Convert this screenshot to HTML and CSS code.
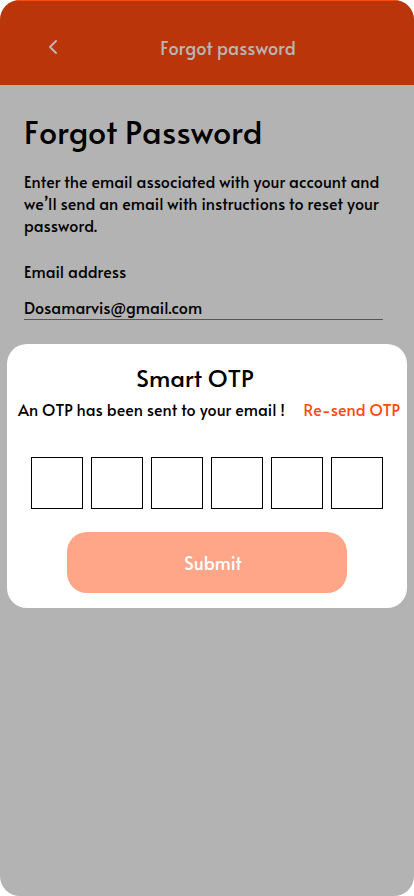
FILE: index.html
```html
<!DOCTYPE html>
<html lang="en">
<head>
<meta charset="utf-8">
<meta name="viewport" content="width=device-width, initial-scale=1">
<title>Forgot password</title>
<link rel="stylesheet" href="styles.css">
</head>
<body>
<div class="screen">
  <header class="bar">
    <button class="back" type="button" aria-label="Back">
      <svg width="10" height="16" viewBox="0 0 10 16" fill="none" stroke="currentColor" stroke-width="2" stroke-linecap="round" stroke-linejoin="round"><path d="M8 2 2 8l6 6"/></svg>
    </button>
    <p class="bar-title">Forgot password</p>
  </header>
  <main class="content">
    <h1>Forgot Password</h1>
    <p class="intro">Enter the email associated with your account and we’ll send an email with instructions to reset your password.</p>
    <label class="label" for="email">Email address</label>
    <input class="email" id="email" type="email" value="Dosamarvis@gmail.com">
  </main>
  <section class="dialog" role="dialog" aria-labelledby="otp-title">
    <h2 id="otp-title">Smart OTP</h2>
    <div class="notice">
      <p>An OTP has been sent to your email !</p>
      <a href="#">Re-send OTP</a>
    </div>
    <form>
      <div class="digits">
        <input type="text" inputmode="numeric" maxlength="1" aria-label="Digit 1">
        <input type="text" inputmode="numeric" maxlength="1" aria-label="Digit 2">
        <input type="text" inputmode="numeric" maxlength="1" aria-label="Digit 3">
        <input type="text" inputmode="numeric" maxlength="1" aria-label="Digit 4">
        <input type="text" inputmode="numeric" maxlength="1" aria-label="Digit 5">
        <input type="text" inputmode="numeric" maxlength="1" aria-label="Digit 6">
      </div>
      <button class="submit" type="submit">Submit</button>
    </form>
  </section>
</div>
</body>
</html>
```
FILE: styles.css
```css
* { box-sizing: border-box; }

body {
  margin: 0;
  background: #fff;
  color: #000;
  font: 400 16px/22px Alata, Lato, sans-serif;
  font-kerning: none;
}

h1, h2, p { margin: 0; font-weight: 400; }

input, button { font: inherit; font-kerning: none; color: inherit; }

.screen {
  min-height: 100vh;
  border-radius: 20px;
  overflow: hidden;
  background: #b3b3b3;
}

.bar {
  display: grid;
  grid-template-columns: 24px 1fr;
  align-items: center;
  padding: 33px 23px 24px 41px;
  border-top: 1px solid #ff4b0c;
  background: #ba360a;
  color: #b9b5b4;
}

.bar-title {
  font-size: 18px;
  line-height: 27px;
  text-align: center;
}

.back {
  display: flex;
  justify-content: center;
  padding: 0 0 1px;
  border: 0;
  background: none;
}

.content { padding: 26px 31px 0 24px; }

h1 { font-size: 32px; line-height: 40px; }

.intro { margin-top: 19px; }

.label { display: block; margin-top: 24px; }

.email {
  display: block;
  width: 100%;
  height: 26px;
  margin-top: 12px;
  padding: 0;
  border: 0;
  border-bottom: 1px solid #555;
  background: none;
  outline: 0;
}

.dialog {
  margin: 24px 7px;
  padding: 19px 7px 15px 11px;
  border-radius: 20px;
  background: #fff;
}

h2 {
  padding-right: 28px;
  font-size: 24px;
  line-height: 30px;
  text-align: center;
}

.notice {
  display: flex;
  justify-content: space-between;
  margin-top: 5px;
  white-space: nowrap;
}

.notice a { color: #ff4b0c; text-decoration: none; }

.digits {
  display: flex;
  justify-content: center;
  gap: 8px;
  margin-top: 37px;
  padding-right: 4px;
}

.digits input {
  width: 52px;
  height: 52px;
  padding: 0;
  border: 1px solid #000;
  border-radius: 0;
  background: #fff;
  text-align: center;
}

.submit {
  display: block;
  width: 280px;
  height: 61px;
  margin: 23px auto 0 49px;
  padding: 0 0 0 12px;
  border: 0;
  border-radius: 20px;
  background: #ffa588;
  color: #fff;
  font-size: 18px;
}
```
